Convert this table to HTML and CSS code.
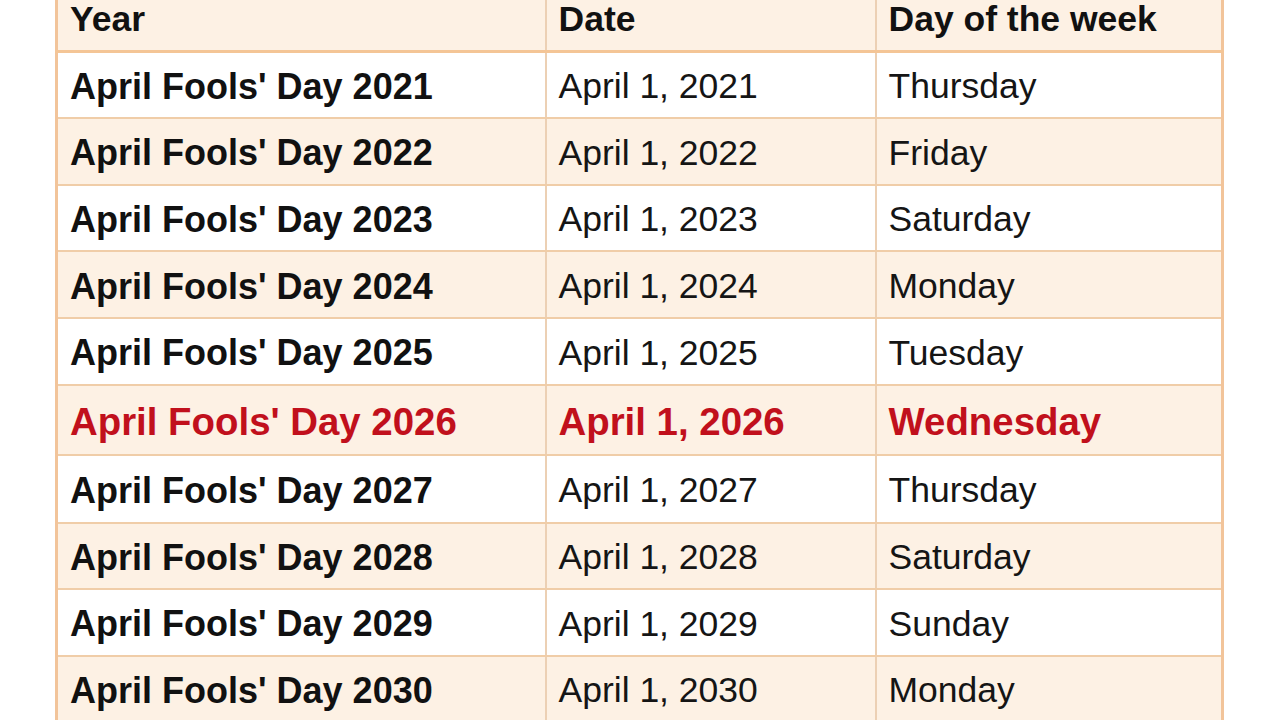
FILE: index.html
```html
<!DOCTYPE html>
<html>
<head>
<meta charset="utf-8">
<link rel="stylesheet" href="styles.css">
</head>
<body>
<table class="fools">
  <colgroup>
    <col class="c1"><col class="c2"><col class="c3">
  </colgroup>
  <tr class="head"><th>Year</th><th>Date</th><th>Day of the week</th></tr>
  <tr class="odd"><td class="b">April Fools' Day 2021</td><td>April 1, 2021</td><td>Thursday</td></tr>
  <tr class="even"><td class="b">April Fools' Day 2022</td><td>April 1, 2022</td><td>Friday</td></tr>
  <tr class="odd"><td class="b">April Fools' Day 2023</td><td>April 1, 2023</td><td>Saturday</td></tr>
  <tr class="even"><td class="b">April Fools' Day 2024</td><td>April 1, 2024</td><td>Monday</td></tr>
  <tr class="odd"><td class="b">April Fools' Day 2025</td><td>April 1, 2025</td><td>Tuesday</td></tr>
  <tr class="even hl"><td>April Fools' Day 2026</td><td>April 1, 2026</td><td>Wednesday</td></tr>
  <tr class="odd r27"><td class="b">April Fools' Day 2027</td><td>April 1, 2027</td><td>Thursday</td></tr>
  <tr class="even"><td class="b">April Fools' Day 2028</td><td>April 1, 2028</td><td>Saturday</td></tr>
  <tr class="odd"><td class="b">April Fools' Day 2029</td><td>April 1, 2029</td><td>Sunday</td></tr>
  <tr class="even"><td class="b">April Fools' Day 2030</td><td>April 1, 2030</td><td>Monday</td></tr>
</table>
</body>
</html>
```
FILE: styles.css
```css
html, body {
  margin: 0;
  padding: 0;
  background: #ffffff;
  overflow: hidden;
}
body {
  font-family: "Liberation Sans", Arial, sans-serif;
  color: #151515;
}
.fools {
  border-collapse: collapse;
  table-layout: fixed;
  width: 1166px;
  margin: -16px 0 0 55px;
  border-left: 3px solid #f2c49a;
  border-right: 3px solid #f2c49a;
}
.c1 { width: 489px; }
.c2 { width: 330px; }
.c3 { width: 347px; }
th, td {
  box-sizing: border-box;
  height: 66.6px;
  padding: 4px 0 0 12px;
  font-size: 35.5px;
  text-align: left;
  vertical-align: middle;
  border-top: 2px solid #f0cda8;
  border-bottom: 2px solid #f0cda8;
  border-left: 2px solid #ecd0b4;
  white-space: nowrap;
  line-height: 1;
}
th {
  font-size: 35.5px;
  font-weight: bold;
  color: #111;
}
.head th { background: #fdf1e4; border-bottom: 3px solid #f4c596; }
.odd td { background: #ffffff; }
.even td { background: #fdf1e4; }
td.b { font-weight: bold; color: #111; font-size: 36px; }
.hl td {
  height: 70px;
  padding-top: 5px;
  font-size: 38.4px;
  font-weight: bold;
  color: #c1101c;
}
.r27 td { height: 68px; }
```
